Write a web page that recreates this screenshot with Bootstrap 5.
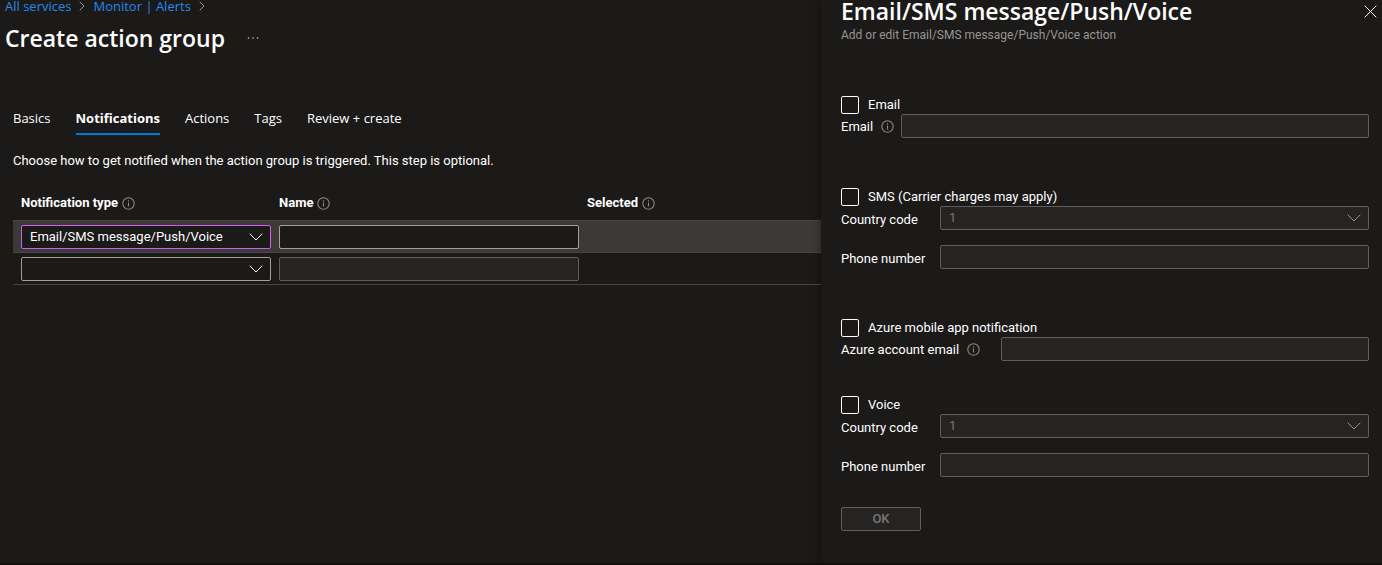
<!DOCTYPE html>
<html lang="en" data-bs-theme="dark">
<head>
<meta charset="utf-8">
<meta name="viewport" content="width=device-width, initial-scale=1">
<title>Create action group</title>
<link href="https://cdn.jsdelivr.net/npm/bootstrap@5.3.0/dist/css/bootstrap.min.css" rel="stylesheet">
<style>
  body { background: #1b1a19; color: #fff; font-family: Roboto, "Open Sans", sans-serif; font-size: 13px; line-height: 20px; }
  .page { min-height: 100vh; border-bottom: 2px solid #11100f; }
  .crumbs, .tabs, .blade-title { font-family: "Open Sans", "Noto Sans", sans-serif; }
  .crumbs { height: 12px; line-height: 12px; gap: 8px; padding-left: 5px; }
  .crumbs a { color: #2389ea; text-decoration: none; }
  .blade-title { font-size: 23px; line-height: 32px; font-weight: 600; margin: 0; }
  .main-title { padding: 10px 0 0 5px; gap: 22px; }
  .plain-btn { background: none; border: 0; padding: 0; color: #c8c6c4; line-height: 0; }
  .content { padding: 54px 0 0 13px; }
  .tabs { gap: 25px; margin-bottom: 16px; }
  .tabs .nav-link { color: #fff; padding: 0 0 5px; border-bottom: 2px solid transparent; }
  .tabs .nav-link.active { font-weight: 700; border-color: #0078d4; }
  .grid-table { table-layout: fixed; width: 100%; margin-top: 14px; }
  .grid-table th { font-weight: 700; padding: 8px 0 7px 8px; line-height: 20px; }
  .grid-table td { padding: 4px 0 3px 8px; height: 32px; }
  .grid-table tr { border-bottom: 1px solid #484644; }
  .grid-table .chosen { background: #3b3a39; }
  .col-type { width: 258px; }
  .col-name { width: 308px; }
  .info { width: 13px; height: 13px; flex: none; color: #8a8886; }
  .field.form-control, .field.form-select { height: 24px; min-height: 24px; padding: 0 8px; font-size: 13px; line-height: 20px; border: 1px solid #a19f9d; border-radius: 2px; background-color: #1b1a19; color: #fff; }
  .field.form-select { background-image: url("data:image/svg+xml,%3Csvg xmlns='http://www.w3.org/2000/svg' viewBox='0 0 14 8'%3E%3Cpath d='M.7.7 7 7 13.3.7' fill='none' stroke='%23fff' stroke-width='1'/%3E%3C/svg%3E"); background-size: 14px 8px; background-position: right 7px center; }
  .field.form-control:disabled, .field.form-select:disabled { background-color: #252423; border-color: #605e5c; color: #797775; opacity: 1; }
  .field.form-select:disabled { background-image: url("data:image/svg+xml,%3Csvg xmlns='http://www.w3.org/2000/svg' viewBox='0 0 14 8'%3E%3Cpath d='M.7.7 7 7 13.3.7' fill='none' stroke='%23979593' stroke-width='1'/%3E%3C/svg%3E"); }
  .field.form-select.current { border-color: #d05cf0; }
  .panel { flex: 0 0 561px; padding: 0 5px 32px 20px; background: #1b1a19; box-shadow: 0 0 8px rgba(0,0,0,.5); z-index: 1; }
  .panel form { padding-right: 8px; }
  .panel-title { line-height: 22px; }
  .sub { font-size: 12px; line-height: 20px; color: #979593; margin: 3px 0 51px; }
  .tick { gap: 9px; height: 18px; }
  .tick .form-check-input { width: 18px; height: 18px; margin: 0; border: 1px solid #fff; border-radius: 2px; background-color: transparent; flex: none; }
  .line { min-height: 24px; }
  .line + .line { margin-top: 15px; }
  .lab { flex: none; width: 99px; padding-top: 3px; }
  .lab-email { width: 60px; padding-top: 1px; }
  .lab-account { width: 160px; padding-top: 1px; }
  .group { margin-bottom: 50px; }
  .group-tight { margin-bottom: 35px; }
  .group-last { margin-bottom: 30px; }
  .ok { width: 80px; height: 24px; padding: 0; font-size: 13px; line-height: 20px; font-weight: 500; border-radius: 2px; }
  .ok:disabled { background: #252423; border-color: #605e5c; color: #797775; opacity: 1; }
</style>
</head>
<body>
<svg class="d-none" aria-hidden="true">
  <symbol id="info" viewBox="0 0 13 13"><circle cx="6.5" cy="6.5" r="5.7" fill="none" stroke="currentColor" stroke-width="1.1"/><path d="M6.500 5.500V9.500M6.500 3.300v1.300" stroke="currentColor" stroke-width="1.1"/></symbol>
  <symbol id="sep" viewBox="0 0 6 10"><path d="M.7.7 5 5 .7 9.300" fill="none" stroke="#979593" stroke-width="1"/></symbol>
</svg>
<div class="page d-flex overflow-hidden">
  <main class="flex-grow-1">
    <nav class="crumbs d-flex align-items-center" aria-label="Breadcrumb">
      <a href="#">All services</a><svg width="6" height="10"><use href="#sep"/></svg>
      <a href="#">Monitor | Alerts</a><svg width="6" height="10"><use href="#sep"/></svg>
    </nav>
    <div class="main-title d-flex align-items-center">
      <h1 class="blade-title">Create action group</h1>
      <button class="plain-btn" type="button" aria-label="More"><svg width="12" height="4" fill="currentColor"><circle cx="1.500" cy="2" r=".8"/><circle cx="6" cy="2" r=".8"/><circle cx="10.500" cy="2" r=".8"/></svg></button>
    </div>
    <div class="content">
      <nav class="tabs nav">
        <a class="nav-link" href="#">Basics</a>
        <a class="nav-link active" href="#" aria-current="page">Notifications</a>
        <a class="nav-link" href="#">Actions</a>
        <a class="nav-link" href="#">Tags</a>
        <a class="nav-link" href="#">Review + create</a>
      </nav>
      <p class="mb-0">Choose how to get notified when the action group is triggered. This step is optional.</p>
      <table class="grid-table">
        <colgroup><col class="col-type"><col class="col-name"><col></colgroup>
        <thead>
          <tr>
            <th scope="col"><span class="d-flex align-items-center gap-1">Notification type <svg class="info"><use href="#info"/></svg></span></th>
            <th scope="col"><span class="d-flex align-items-center gap-1">Name <svg class="info"><use href="#info"/></svg></span></th>
            <th scope="col"><span class="d-flex align-items-center gap-1">Selected <svg class="info"><use href="#info"/></svg></span></th>
          </tr>
        </thead>
        <tbody>
          <tr class="chosen">
            <td><select class="field form-select current" aria-label="Notification type"><option>Email/SMS message/Push/Voice</option></select></td>
            <td><input class="field form-control" type="text" aria-label="Name"></td>
            <td></td>
          </tr>
          <tr>
            <td><select class="field form-select" aria-label="Notification type"><option></option></select></td>
            <td><input class="field form-control" type="text" aria-label="Name" disabled></td>
            <td></td>
          </tr>
        </tbody>
      </table>
    </div>
  </main>
  <aside class="panel">
    <div class="d-flex justify-content-between align-items-center">
      <h2 class="blade-title panel-title">Email/SMS message/Push/Voice</h2>
      <button class="plain-btn" type="button" aria-label="Close"><svg width="13" height="13"><path d="M.7.7l11.600 11.600M12.300.7.7 12.300" stroke="#fff" stroke-width="1"/></svg></button>
    </div>
    <p class="sub">Add or edit Email/SMS message/Push/Voice action</p>
    <form>
      <div class="group">
        <div class="tick d-flex align-items-center"><input class="form-check-input" type="checkbox" id="c1"><label for="c1">Email</label></div>
        <div class="line d-flex align-items-center"><div class="lab lab-email d-flex align-items-center gap-2"><label for="f1">Email</label><svg class="info"><use href="#info"/></svg></div><input class="field form-control" type="email" id="f1" disabled></div>
      </div>
      <div class="group">
        <div class="tick d-flex align-items-center"><input class="form-check-input" type="checkbox" id="c2"><label for="c2">SMS (Carrier charges may apply)</label></div>
        <div class="line d-flex align-items-center"><label class="lab" for="f2">Country code</label><select class="field form-select" id="f2" disabled><option>1</option></select></div>
        <div class="line d-flex align-items-center"><label class="lab" for="f3">Phone number</label><input class="field form-control" type="tel" id="f3" disabled></div>
      </div>
      <div class="group group-tight">
        <div class="tick d-flex align-items-center"><input class="form-check-input" type="checkbox" id="c3"><label for="c3">Azure mobile app notification</label></div>
        <div class="line d-flex align-items-center"><div class="lab lab-account d-flex align-items-center gap-2"><label for="f4">Azure account email</label><svg class="info"><use href="#info"/></svg></div><input class="field form-control" type="email" id="f4" disabled></div>
      </div>
      <div class="group group-last">
        <div class="tick d-flex align-items-center"><input class="form-check-input" type="checkbox" id="c4"><label for="c4">Voice</label></div>
        <div class="line d-flex align-items-center"><label class="lab" for="f5">Country code</label><select class="field form-select" id="f5" disabled><option>1</option></select></div>
        <div class="line d-flex align-items-center"><label class="lab" for="f6">Phone number</label><input class="field form-control" type="tel" id="f6" disabled></div>
      </div>
      <button class="ok btn" type="submit" disabled>OK</button>
    </form>
  </aside>
</div>
<script src="https://cdn.jsdelivr.net/npm/bootstrap@5.3.0/dist/js/bootstrap.bundle.min.js"></script>
</body>
</html>
